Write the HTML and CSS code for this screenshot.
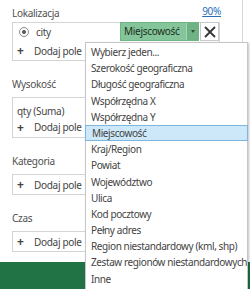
FILE: index.html
```html
<!DOCTYPE html>
<html lang="pl">
<head>
    <meta charset="UTF-8">
    <title>Pola warstwy</title>
    <link rel="stylesheet" href="styles.css">
</head>
<body>
    <div class="pane">
        <div class="fields">
            <div class="section first">
                <div class="label-row">
                    <span class="label">Lokalizacja</span>
                    <a class="pct" href="#">90%</a>
                </div>
                <div class="box">
                    <div class="row geo-row">
                        <span class="radio"><span class="dot"></span></span>
                        <span class="field-name">city</span>
                        <span class="combo">
                            <span class="combo-text">Miejscowość</span>
                            <span class="combo-arrow"><span class="tri"></span></span>
                        </span>
                        <span class="remove">
                            <svg width="12" height="12" viewBox="0 0 12 12"><path d="M1 1L11 11M11 1L1 11" stroke="#333" stroke-width="1.8" fill="none"/></svg>
                        </span>
                    </div>
                    <div class="row add"><span class="plus">+</span>Dodaj pole</div>
                </div>
            </div>

            <div class="section">
                <div class="label">Wysokość</div>
                <div class="box">
                    <div class="row value">qty (Suma)</div>
                    <div class="row add"><span class="plus">+</span>Dodaj pole</div>
                </div>
            </div>

            <div class="section">
                <div class="label">Kategoria</div>
                <div class="box">
                    <div class="row add"><span class="plus">+</span>Dodaj pole</div>
                </div>
            </div>

            <div class="section">
                <div class="label">Czas</div>
                <div class="box">
                    <div class="row add"><span class="plus">+</span>Dodaj pole</div>
                </div>
            </div>
        </div>
        <div class="statusbar"></div>
    </div>

    <ul class="dropdown">
        <li>Wybierz jeden...</li>
        <li>Szerokość geograficzna</li>
        <li>Długość geograficzna</li>
        <li>Współrzędna X</li>
        <li>Współrzędna Y</li>
        <li class="selected">Miejscowość</li>
        <li>Kraj/Region</li>
        <li>Powiat</li>
        <li>Województwo</li>
        <li>Ulica</li>
        <li>Kod pocztowy</li>
        <li>Pełny adres</li>
        <li>Region niestandardowy (kml, shp)</li>
        <li>Zestaw regionów niestandardowych</li>
        <li>Inne</li>
    </ul>
</body>
</html>
```

FILE: styles.css
```css
body {
    margin: 0;
    width: 250px;
    height: 289px;
    overflow: hidden;
    position: relative;
    background: #fff;
    font-family: "Noto Sans", "Open Sans", sans-serif;
    font-size: 10px;
    letter-spacing: -0.3px;
    color: #444;
}
.pane {
    height: 289px;
    display: flex;
    flex-direction: column;
}
.fields {
    flex: 1;
    width: 243px;
    border-right: 1px solid #d6d6d6;
    padding: 0 0 0 12px;
    box-sizing: border-box;
}
.section {
    margin-top: 15px;
    width: 208px;
}
.section.first {
    margin-top: 5px;
}
.label-row {
    display: flex;
    justify-content: space-between;
    align-items: center;
}
.label {
    line-height: 16px;
    height: 16px;
    margin-bottom: 5px;
    color: #505050;
}
.label-row .label {
    margin-bottom: 0;
}
.pct {
    color: #2a6ebb;
    margin-right: -1px;
    margin-top: -4px;
}
.box {
    border: 1px solid #d4d4d4;
}
.section.first .box {
    margin-top: 1px;
}
.row {
    display: flex;
    align-items: center;
    height: 17px;
}
.geo-row {
    height: 19px;
    margin-top: -1px;
}
.radio {
    width: 8px;
    height: 8px;
    border: 1px solid #8a8a8a;
    border-radius: 50%;
    display: flex;
    align-items: center;
    justify-content: center;
    margin-left: 6px;
    margin-right: 7px;
}
.dot {
    width: 4px;
    height: 4px;
    border-radius: 50%;
    background: #555;
}
.field-name {
    flex: 1;
}
.combo {
    display: flex;
    width: 79px;
    height: 19px;
    background: #84c59a;
    border: 1px solid #6fb487;
    box-sizing: border-box;
}
.combo-text {
    flex: 1;
    padding-left: 3px;
    line-height: 17px;
    color: #1e2e24;
}
.combo-arrow {
    width: 11px;
    background: #6fb385;
    border-left: 1px solid #a6d6b5;
    display: flex;
    align-items: center;
    justify-content: center;
}
.tri {
    width: 0;
    height: 0;
    border-left: 2px solid transparent;
    border-right: 2px solid transparent;
    border-top: 3px solid #2f4f3a;
}
.remove {
    width: 19px;
    height: 19px;
    box-sizing: border-box;
    border: 1px solid #c8c8c8;
    margin-left: 1px;
    display: flex;
    align-items: center;
    justify-content: center;
    background: #fff;
}
.add {
    height: 19px;
    padding-left: 4px;
}
.plus {
    font-weight: bold;
    font-size: 12px;
    color: #444;
    width: 17px;
}
.value {
    padding-left: 4px;
    height: 17px;
    margin-top: 4px;
}
.section .box .value + .add {
    height: 16px;
    margin-bottom: 2px;
}
.statusbar {
    height: 27px;
    background: #217346;
}
.dropdown {
    position: absolute;
    left: 85px;
    top: 42px;
    width: 161px;
    margin: 0;
    padding: 1px 0 2px;
    list-style: none;
    background: #fff;
    border: 1px solid #c6c6c6;
    box-shadow: 1px 1px 2px rgba(0,0,0,0.25);
    letter-spacing: -0.4px;
}
.dropdown li {
    height: 16.2px;
    line-height: 16.2px;
    padding-left: 5px;
    color: #444;
    white-space: nowrap;
    box-sizing: border-box;
}
.dropdown li.selected {
    background: #cde8f8;
    border: 1px solid #7fb6e0;
    margin: 0 -1px;
    padding-left: 6px;
    line-height: 14.2px;
}
```
